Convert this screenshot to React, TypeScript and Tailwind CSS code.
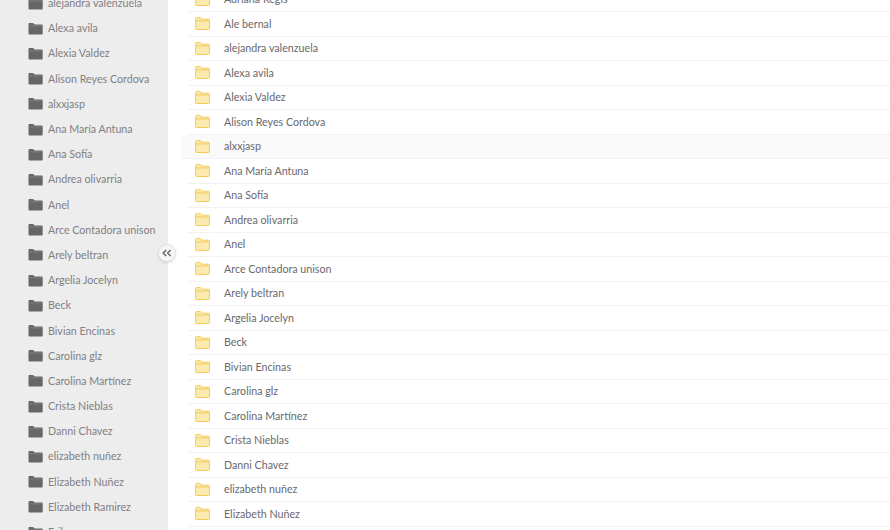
const names = ["alejandra valenzuela","Alexa avila","Alexia Valdez","Alison Reyes Cordova","alxxjasp","Ana María Antuna","Ana Sofía","Andrea olivarria","Anel","Arce Contadora unison","Arely beltran","Argelia Jocelyn","Beck","Bivian Encinas","Carolina glz","Carolina Martínez","Crista Nieblas","Danni Chavez","elizabeth nuñez","Elizabeth Nuñez","Elizabeth Ramirez","Erika"];
const mainNames = ["Adriana Regis","Ale bernal",...names.slice(0,20)];

function DarkFolder() {
  return (
    <svg width="15" height="13" viewBox="0 0 15 13" className="shrink-0">
      <path d="M0.5 2.2C0.5 1.4 1 1 1.7 1H5L6.6 2.6H13.4C14.2 2.6 14.7 3.1 14.7 3.8V11.2C14.7 12 14.2 12.5 13.4 12.5H1.7C1 12.5 0.5 12 0.5 11.2Z" fill="#666668" />
      <path d="M0.5 3.9H14.7" stroke="#8a8a8a" strokeWidth="0.7" />
    </svg>
  );
}

function YellowFolder() {
  return (
    <svg width="15" height="13" viewBox="0 0 15 13" className="shrink-0">
      <path d="M0.6 1.6C0.6 1 1 0.6 1.6 0.6H5.4L7 2.2H13.6C14.2 2.2 14.5 2.6 14.5 3.2V11.6C14.5 12.1 14.1 12.5 13.6 12.5H1.6C1 12.5 0.6 12.1 0.6 11.6Z" fill="#fbe9ad" stroke="#f3cd5c" strokeWidth="1" />
      <path d="M0.6 3.9H14.5" stroke="#f3cd5c" strokeWidth="1" />
    </svg>
  );
}

export default function App() {
  return (
    <div className="flex h-[530px] w-[890px] overflow-hidden bg-white font-['Lato','Liberation_Sans',sans-serif]">
      <aside className="relative h-full w-[168px] shrink-0 bg-[#ededed]">
        <div className="-mt-[9.5px] flex flex-col pl-[28px]">
          {names.map((n) => (
            <div key={n} className="flex h-[25.2px] items-center gap-[5px] text-[10.7px] whitespace-nowrap text-[#808083]">
              <DarkFolder />
              <span>{n}</span>
            </div>
          ))}
        </div>
        <button className="absolute top-[244px] left-[158px] flex h-[18px] w-[18px] items-center justify-center rounded-full border border-[#e4e4e4] bg-[#f6f6f6] text-[#66666a] shadow-sm">
          <svg width="10" height="8" viewBox="0 0 10 8" fill="none" stroke="currentColor" strokeWidth="1.5">
            <path d="M4.2 1 1.2 4l3 3M8.6 1l-3 3 3 3" />
          </svg>
        </button>
      </aside>
      <main className="min-w-0 flex-1 pl-[20px]">
        <div className="-mt-[12.5px] flex flex-col">
          {mainNames.map((n) => (
            <div
              key={n}
              className={"flex h-[24.5px] items-center border-b border-[#f2f2f2] pl-[7px] text-[10.7px] whitespace-nowrap text-[#69696d] " + (n === "alxxjasp" ? "-ml-[7px] rounded-l-[4px] bg-[#fafafa] pl-[14px]" : "")}
            >
              <YellowFolder />
              <span className="ml-[14px]">{n}</span>
            </div>
          ))}
        </div>
      </main>
    </div>
  );
}
